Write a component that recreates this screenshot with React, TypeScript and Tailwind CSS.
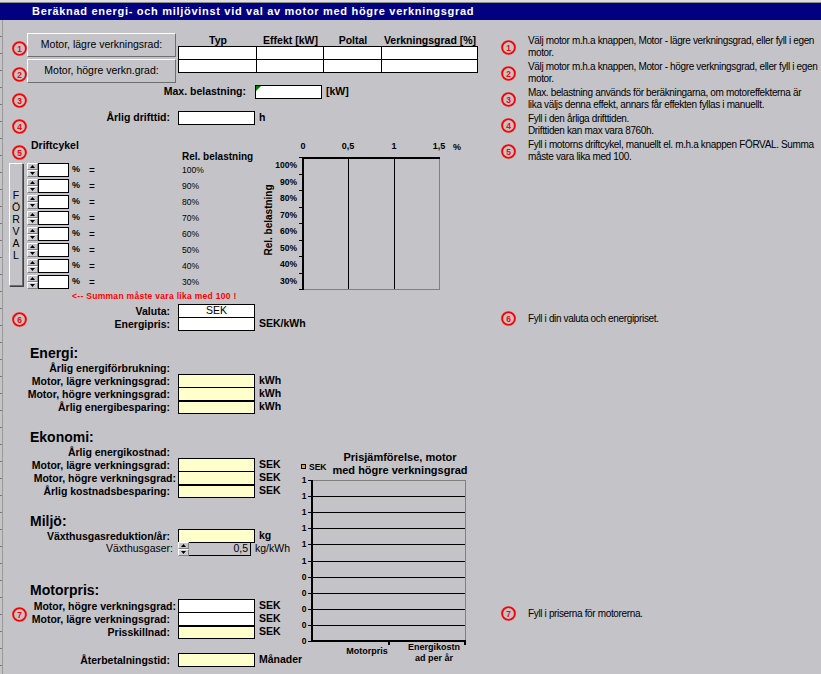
import type { ReactNode } from "react";

// Beräkningsblad: energi- och miljövinst för motor med högre verkningsgrad

function Circ({ n }: { n: number }) {
  return (
    <svg width="15" height="15" viewBox="0 0 15 15" className="block shrink-0">
      <circle cx="7.5" cy="7.5" r="6.4" fill="none" stroke="#ff0000" strokeWidth="1.9" />
      <text x="7.5" y="10.6" textAnchor="middle" fontSize="8.5" fontWeight="700" fill="#ff0000">
        {n}
      </text>
    </svg>
  );
}

function Raised({ className = "", children }: { className?: string; children?: ReactNode }) {
  return (
    <div
      className={`border border-t-white border-l-white border-r-[#6e6e6e] border-b-[#6e6e6e] bg-[#c4c3c7] ${className}`}
    >
      {children}
    </div>
  );
}

function Spin() {
  return (
    <div className="flex h-[14px] w-[11px] shrink-0 flex-col">
      <div className="flex flex-1 items-center justify-center border border-t-white border-l-white border-r-[#808080] border-b-[#808080] bg-[#c4c3c7]">
        <svg width="5" height="3" className="block">
          <path d="M2.5 0L5 3H0Z" fill="#000" />
        </svg>
      </div>
      <div className="flex flex-1 items-center justify-center border border-t-white border-l-white border-r-[#808080] border-b-[#808080] bg-[#d0cfd3]">
        <svg width="5" height="3" className="block">
          <path d="M0 0H5L2.5 3Z" fill="#000" />
        </svg>
      </div>
    </div>
  );
}

interface RowProps {
  label: string;
  unit?: string;
  tone?: "y" | "w";
  thick?: boolean;
  first?: boolean;
  pad?: string;
  value?: string;
}

function FormRow({ label, unit, tone = "y", thick, first, pad = "pr-[8px]", value }: RowProps) {
  return (
    <div className={`flex h-[14px] items-center ${first ? "" : "-mt-px"}`}>
      <div
        className={`flex w-[151px] shrink-0 justify-end whitespace-nowrap text-[10.5px] font-bold leading-[14px] ${pad}`}
      >
        {label}
      </div>
      <div
        className={`flex h-[14px] w-[77px] shrink-0 items-center justify-center border border-black text-[10.5px] ${
          thick ? "border-t-2" : ""
        } ${tone === "y" ? "bg-[#ffffcc]" : "bg-white"}`}
      >
        {value}
      </div>
      {unit && <div className="whitespace-nowrap pl-[4px] text-[10.5px] font-bold">{unit}</div>}
    </div>
  );
}

function Heading({ className, children }: { className: string; children: ReactNode }) {
  return <div className={`pl-[27px] text-[14px] font-bold ${className}`}>{children}</div>;
}

function Sub({ children }: { children: ReactNode }) {
  return (
    <div className="ml-[24px] flex h-[12px] w-[151px] items-center justify-end whitespace-nowrap pr-[8px] text-[10.5px] font-bold leading-[12px]">
      {children}
    </div>
  );
}

function DriftChart() {
  const rows = ["100%", "90%", "80%", "70%", "60%", "50%", "40%", "30%"];
  const top = 22;
  const step = 132 / 8;
  return (
    <svg width="215" height="169" className="block shrink-0">
      <g fontSize="9" fontWeight="700" fill="#000" textAnchor="middle">
        <text x="45" y="14">0</text>
        <text x="90" y="14">0,5</text>
        <text x="136" y="14">1</text>
        <text x="181" y="14">1,5</text>
        <text x="199" y="15">%</text>
      </g>
      <line x1="181.5" y1="23" x2="181.5" y2="155" stroke="#808080" />
      <line x1="45" y1="154.5" x2="182" y2="154.5" stroke="#808080" />
      <line x1="90.5" y1="23" x2="90.5" y2="154" stroke="#000" />
      <line x1="136.5" y1="23" x2="136.5" y2="154" stroke="#000" />
      <rect x="44" y="22" width="138" height="2" fill="#000" />
      <rect x="44" y="22" width="2" height="133" fill="#000" />
      {Array.from({ length: 9 }).map((_, i) => (
        <rect key={i} x="41" y={Math.round(top + i * step)} width="3" height="1" fill="#000" />
      ))}
      <g fontSize="8.5" fontWeight="700" fill="#000" textAnchor="end">
        {rows.map((r, i) => (
          <text key={r} x="39" y={top + (i + 0.5) * step + 3}>
            {r}
          </text>
        ))}
      </g>
      <text
        x="10"
        y="85"
        fontSize="10"
        fontWeight="700"
        textAnchor="middle"
        dominantBaseline="central"
        transform="rotate(-90 10 85)"
      >
        Rel. belastning
      </text>
    </svg>
  );
}

function PriceChart() {
  const top = 40;
  const step = 16.1;
  return (
    <svg width="185" height="234" className="block shrink-0">
      <g fontSize="11" fontWeight="700" textAnchor="middle" fill="#000">
        <text x="110" y="21">Prisjämförelse, motor</text>
        <text x="110" y="34">med högre verkningsgrad</text>
      </g>
      <rect x="11.5" y="24.5" width="4" height="4" fill="#ff9900" stroke="#000" strokeWidth="1" />
      <text x="19" y="30" fontSize="8.5" fontWeight="700">
        SEK
      </text>
      <line x1="22" y1="40.5" x2="176" y2="40.5" stroke="#808080" />
      <line x1="175.5" y1="40" x2="175.5" y2="201" stroke="#808080" />
      {Array.from({ length: 9 }).map((_, i) => (
        <rect key={i} x="22" y={Math.round(top + (i + 1) * step)} width="153" height="1" fill="#000" />
      ))}
      {Array.from({ length: 11 }).map((_, i) => (
        <rect key={i} x="18" y={Math.round(top + i * step)} width="3" height="1" fill="#000" />
      ))}
      <rect x="21" y="40" width="2" height="162" fill="#000" />
      <rect x="21" y="200" width="155" height="2" fill="#000" />
      <rect x="98" y="202" width="2" height="3" fill="#000" />
      <rect x="174" y="202" width="2" height="3" fill="#000" />
      <g fontSize="8.5" fontWeight="700" textAnchor="middle" fill="#000">
        {Array.from({ length: 11 }).map((_, i) => (
          <text key={i} x="14" y={top + i * step + 3}>
            {i < 6 ? "1" : "0"}
          </text>
        ))}
      </g>
      <g fontSize="9" fontWeight="700" textAnchor="middle" fill="#000">
        <text x="77" y="214">Motorpris</text>
        <text x="144" y="210">Energikostn</text>
        <text x="144" y="221">ad per år</text>
      </g>
    </svg>
  );
}

function Note({ n, lines }: { n: number; lines: string[] }) {
  return (
    <div className="flex items-center">
      <div className="w-[38px] shrink-0 pl-[11px]">
        <Circ n={n} />
      </div>
      <div className="whitespace-nowrap text-[10px] leading-[12px] tracking-[-0.35px]">
        {lines.map((l) => (
          <div key={l}>{l}</div>
        ))}
      </div>
    </div>
  );
}

const notes: [number, string[]][] = [
  [1, ["Välj motor m.h.a knappen, Motor - lägre verkningsgrad, eller fyll i egen", "motor."]],
  [2, ["Välj motor m.h.a knappen, Motor - högre verkningsgrad, eller fyll i egen", "motor."]],
  [
    3,
    [
      "Max. belastning används för beräkningarna, om motoreffekterna är",
      "lika väljs denna effekt, annars får effekten fyllas i manuellt.",
    ],
  ],
  [4, ["Fyll i den årliga drifttiden.", "Drifttiden kan max vara 8760h."]],
  [5, ["Fyll i motorns driftcykel, manuellt el. m.h.a knappen FÖRVAL. Summa", "måste vara lika med 100."]],
];

const tableCols = ["w-[78px]", "w-[67px]", "w-[58px]", "w-[96px]"];
const cycle = ["100%", "90%", "80%", "70%", "60%", "50%", "40%", "30%"];

export default function App() {
  return (
    <div className="flex h-[674px] w-[821px] flex-col overflow-hidden bg-[#c4c3c7] font-['Liberation_Sans',Arial,sans-serif] text-black">
      <div className="h-[3px] shrink-0 border-b border-[#8c8c8c] bg-[#dedede]" />
      <div className="h-[17px] shrink-0 whitespace-nowrap bg-[#000080] pl-[32px] text-[11px] font-bold leading-[17px] tracking-[0.7px] text-white">
        Beräknad energi- och miljövinst vid val av motor med högre verkningsgrad
      </div>

      <div className="flex flex-1">
        <div className="w-[3px] shrink-0 border-r border-[#9a9a9a] bg-[repeating-linear-gradient(to_bottom,transparent_0px,transparent_16px,#7a7a7a_16px,#7a7a7a_17px)]" />

        {/* vänster: inmatning */}
        <div className="w-[487px] shrink-0">
          <div className="flex h-[65px]">
            <div className="flex w-[24px] shrink-0 flex-col gap-[11px] pl-[9px] pt-[21px]">
              <Circ n={1} />
              <Circ n={2} />
            </div>
            <div className="flex w-[151px] shrink-0 flex-col gap-[2px] pt-[13px]">
              <Raised className="flex h-[24px] w-[149px] items-center justify-center whitespace-nowrap text-[10.5px]">
                Motor, lägre verkningsrad:
              </Raised>
              <Raised className="flex h-[24px] w-[149px] items-center justify-center whitespace-nowrap text-[10.5px]">
                Motor, högre verkn.grad:
              </Raised>
            </div>
            <div className="pt-[15px]">
              <div className="flex h-[11px] whitespace-nowrap pl-px text-[10.5px] font-bold leading-[11px]">
                <div className="w-[78px] text-center">Typ</div>
                <div className="w-[67px] text-center">Effekt [kW]</div>
                <div className="w-[58px] text-center">Poltal</div>
                <div className="w-[96px] text-center">Verkningsgrad [%]</div>
              </div>
              <div className="border-l border-t border-black">
                {[0, 1].map((r) => (
                  <div key={r} className="flex">
                    {tableCols.map((w) => (
                      <div key={w} className={`${w} h-[13px] border-b border-r border-black bg-white`} />
                    ))}
                  </div>
                ))}
              </div>
            </div>
          </div>

          <div className="flex h-[26px]">
            <div className="w-[24px] shrink-0 pl-[9px] pt-[8px]">
              <Circ n={3} />
            </div>
            <div className="flex h-[14px] items-center">
              <div className="flex w-[228px] justify-end whitespace-nowrap pr-[9px] text-[10.5px] font-bold">
                Max. belastning:
              </div>
              <div className="relative h-[14px] w-[67px] border border-black bg-white">
                <div className="absolute left-0 top-0 h-0 w-0 border-r-[5px] border-t-[5px] border-r-transparent border-t-[#008000]" />
              </div>
              <div className="pl-[4px] text-[10.5px] font-bold">[kW]</div>
            </div>
          </div>

          <div className="flex h-[24px]">
            <div className="w-[24px] shrink-0 pl-[9px] pt-[8px]">
              <Circ n={4} />
            </div>
            <div className="flex h-[14px] items-center">
              <div className="flex w-[151px] justify-end whitespace-nowrap pr-[8px] text-[10.5px] font-bold">
                Årlig drifttid:
              </div>
              <div className="h-[14px] w-[77px] border border-black bg-white" />
              <div className="pl-[4px] text-[10.5px] font-bold">h</div>
            </div>
          </div>

          {/* driftcykel */}
          <div className="flex h-[169px]">
            <div className="w-[255px] shrink-0">
              <div className="flex h-[28px]">
                <div className="w-[24px] shrink-0 pl-[9px] pt-[10px]">
                  <Circ n={5} />
                </div>
                <div className="pt-[4px] text-[10.5px] font-bold">
                  <div className="h-[12px] pl-[4px] leading-[12px]">Driftcykel</div>
                  <div className="h-[12px] whitespace-nowrap pl-[155px] text-[10px] leading-[12px]">
                    Rel. belastning
                  </div>
                </div>
              </div>
              <div className="flex h-[128px]">
                <div className="w-[6px] shrink-0" />
                <Raised className="flex h-[123px] w-[14px] shrink-0 flex-col items-center justify-center text-[10.5px] leading-[12px] shadow-[1px_1px_0_#404040]">
                  {"FÖRVAL".split("").map((c) => (
                    <span key={c}>{c}</span>
                  ))}
                </Raised>
                <div className="w-[4px] shrink-0" />
                <div className="flex flex-col">
                  {cycle.map((c) => (
                    <div key={c} className="flex h-[16px] items-start">
                      <Spin />
                      <div className="h-[14px] w-[31px] border border-black bg-white" />
                      <div className="flex h-[14px] items-center">
                        <span className="w-[20px] pl-[3px] text-[9px] font-bold">%</span>
                        <span className="w-[93px] text-[10px]">=</span>
                        <span className="text-[8.5px]">{c}</span>
                      </div>
                    </div>
                  ))}
                </div>
              </div>
              <div className="h-[13px] whitespace-nowrap pl-[69px] text-[8.5px] font-bold leading-[11px] tracking-[0.3px] text-[#ff0000]">
                {"<-- Summan måste vara lika med 100 !"}
              </div>
            </div>
            <DriftChart />
          </div>

          <div className="flex h-[26px]">
            <div className="w-[24px] shrink-0 pl-[9px] pt-[8px]">
              <Circ n={6} />
            </div>
            <div>
              <FormRow first label="Valuta:" tone="w" value="SEK" />
              <FormRow label="Energipris:" tone="w" unit="SEK/kWh" />
            </div>
          </div>

          <div className="flex">
            <div className="w-[287px] shrink-0">
              <Heading className="mt-[14px] h-[18px] leading-[18px]">Energi:</Heading>
              <Sub>Årlig energiförbrukning:</Sub>
              <div className="pl-[24px]">
                <FormRow first label="Motor, lägre verkningsgrad:" unit="kWh" />
                <FormRow label="Motor, högre verkningsgrad:" unit="kWh" />
                <FormRow label="Årlig energibesparing:" unit="kWh" thick />
              </div>

              <Heading className="mt-[14px] h-[18px] leading-[18px]">Ekonomi:</Heading>
              <Sub>Årlig energikostnad:</Sub>
              <div className="pl-[24px]">
                <FormRow first label="Motor, lägre verkningsgrad:" unit="SEK" />
                <FormRow label="Motor, högre verkningsgrad:" unit="SEK" pad="pr-[2px]" />
                <FormRow label="Årlig kostnadsbesparing:" unit="SEK" thick />
              </div>

              <Heading className="mt-[15px] h-[16px] leading-[16px]">Miljö:</Heading>
              <div className="pl-[24px]">
                <FormRow first label="Växthusgasreduktion/år:" unit="kg" />
                <div className="-mt-px flex h-[14px] items-center">
                  <div className="flex w-[151px] shrink-0 justify-end whitespace-nowrap pr-[5px] text-[10.5px]">
                    Växthusgaser:
                  </div>
                  <Spin />
                  <div className="flex h-[14px] w-[66px] items-center justify-end border-y border-r border-black pr-[2px] text-[10.5px]">
                    0,5
                  </div>
                  <div className="pl-[4px] text-[10.5px]">kg/kWh</div>
                </div>
              </div>

              <Heading className="mt-[26px] h-[17px] leading-[17px]">Motorpris:</Heading>
              <div className="flex">
                <div className="w-[24px] shrink-0 pl-[9px] pt-[8px]">
                  <Circ n={7} />
                </div>
                <div>
                  <FormRow first label="Motor, högre verkningsgrad:" unit="SEK" tone="w" pad="pr-[2px]" />
                  <FormRow label="Motor, lägre verkningsgrad:" unit="SEK" tone="w" />
                  <FormRow label="Prisskillnad:" unit="SEK" thick />
                </div>
              </div>
              <div className="mt-[14px] pl-[24px]">
                <FormRow first label="Återbetalningstid:" unit="Månader" />
              </div>
            </div>
            <div className="pt-[110px]">
              <PriceChart />
            </div>
          </div>
        </div>

        {/* höger: instruktioner */}
        <div className="flex-1 pt-[15px]">
          <div className="flex flex-col gap-[2px]">
            {notes.map(([n, lines]) => (
              <Note key={n} n={n} lines={lines} />
            ))}
          </div>
          <div className="mt-[148px]">
            <Note n={6} lines={["Fyll i din valuta och energipriset."]} />
          </div>
          <div className="mt-[280px]">
            <Note n={7} lines={["Fyll i priserna för motorerna."]} />
          </div>
        </div>
      </div>
    </div>
  );
}
